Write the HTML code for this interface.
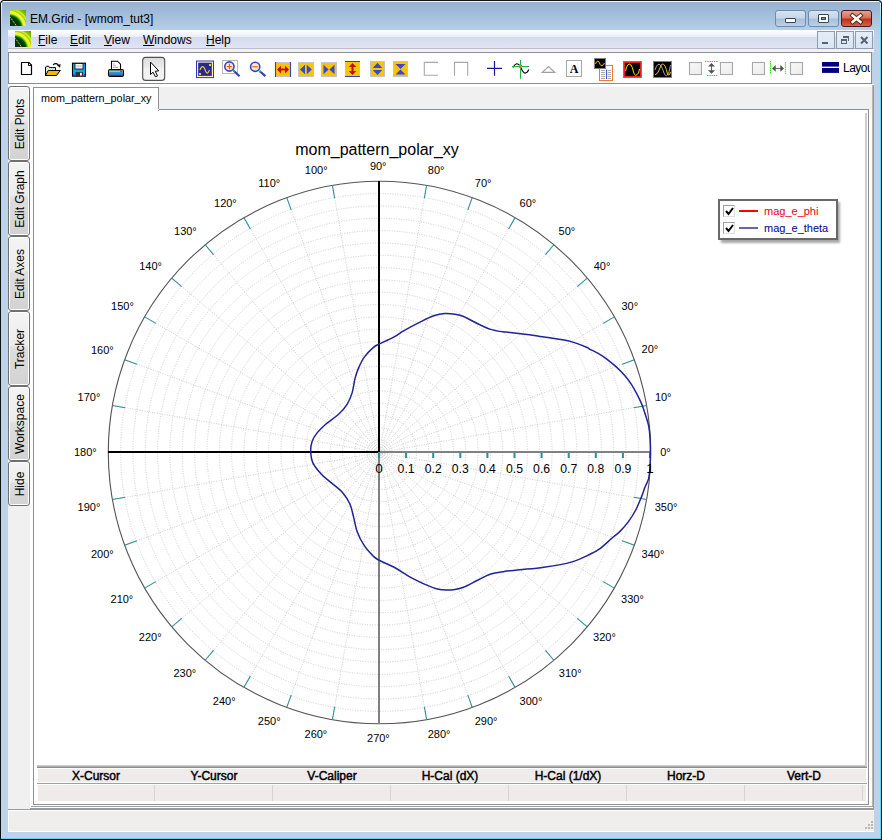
<!DOCTYPE html>
<html><head><meta charset="utf-8">
<style>
html,body{margin:0;padding:0;width:882px;height:840px;overflow:hidden;background:#fff;}
body{position:relative;font-family:"Liberation Sans",sans-serif;}
.a{position:absolute;box-sizing:border-box;}
.t{position:absolute;white-space:nowrap;line-height:1;}
svg text{font-family:"Liberation Sans",sans-serif;fill:#000;}
.al{font-size:11px;}
.tab{position:absolute;box-sizing:border-box;left:8px;width:22px;border:1px solid #707070;border-radius:3px;box-shadow:inset 0 0 0 1px #fff;background:linear-gradient(to bottom,#f4f4f4 0%,#ececec 45%,#dedede 50%,#d2d2d2 100%);}
.tab span{position:absolute;left:calc(50% + 1px);top:50%;transform:translate(-50%,-50%) rotate(-90deg);font-size:12px;white-space:nowrap;color:#000;}
.hd{position:absolute;top:769px;height:14px;width:118px;text-align:center;font-size:12px;font-weight:normal;-webkit-text-stroke:0.45px #000;line-height:14px;color:#000;}
.sep{position:absolute;top:785px;height:16px;width:1px;background:#d8d4d2;}
</style></head><body>
<!-- window frame -->
<div class="a" style="left:0;top:0;width:882px;height:840px;background:#111;border-radius:4px 4px 0 0;"></div>
<div class="a" style="left:1px;top:1px;width:880px;height:838px;background:linear-gradient(#97b2d1 0px,#9db8d6 8px,#b6cfe8 29px,#bcd3ea 40px,#bcd3ea 100%);border-radius:3px 3px 0 0;"></div>
<div class="a" style="left:3px;top:1px;width:876px;height:1px;background:#f4f8fc;"></div>
<div class="a" style="left:1px;top:3px;width:1px;height:30px;background:linear-gradient(#f4f8fc,rgba(244,248,252,0));"></div>
<div class="a" style="left:880px;top:3px;width:1px;height:836px;background:linear-gradient(#c8f4fc 0px,#5cd6f4 30px,#5cd6f4 100%);"></div>
<div class="a" style="left:1px;top:838px;width:880px;height:1px;background:#5cd6f4;"></div>
<div class="a" style="left:0;top:839px;width:882px;height:1px;background:#000;"></div>

<!-- title icon -->
<svg class="a" style="left:10px;top:10px" width="16" height="16" viewBox="0 0 16 16">
<defs><radialGradient id="ic1" cx="-1" cy="18" r="24" gradientUnits="userSpaceOnUse">
<stop offset="0" stop-color="#0a3008"/><stop offset="0.45" stop-color="#063a06"/><stop offset="0.52" stop-color="#0a6a0a"/><stop offset="0.56" stop-color="#60c010"/><stop offset="0.62" stop-color="#f4f830"/><stop offset="0.7" stop-color="#e8f428"/><stop offset="0.74" stop-color="#98d018"/><stop offset="0.8" stop-color="#d8f020"/><stop offset="0.86" stop-color="#88c010"/><stop offset="1" stop-color="#68a400"/></radialGradient></defs>
<rect width="16" height="16" fill="url(#ic1)"/>
<path d="M0.5 7.5 L6.5 16" stroke="#e8e8e8" stroke-width="1" stroke-dasharray="1 1"/>
</svg>
<div class="t" style="left:30px;top:13px;font-size:12px;color:#000;">EM.Grid - [wmom_tut3]</div>

<!-- caption buttons -->
<div class="a" style="left:775px;top:10px;width:31px;height:17px;border:1px solid #6f8ca9;border-radius:3px;background:linear-gradient(#d6e3f1 0%,#c6d7ea 45%,#a9c0da 55%,#bcd0e6 100%);"></div>
<div class="a" style="left:785px;top:18px;width:11px;height:5px;background:#fff;border:1px solid #3a4656;border-radius:1px;"></div>
<div class="a" style="left:808px;top:10px;width:31px;height:17px;border:1px solid #6f8ca9;border-radius:3px;background:linear-gradient(#d6e3f1 0%,#c6d7ea 45%,#a9c0da 55%,#bcd0e6 100%);"></div>
<div class="a" style="left:818px;top:14px;width:11px;height:9px;background:#fff;border:1px solid #3a4656;border-radius:1px;"></div>
<div class="a" style="left:821px;top:17px;width:5px;height:3px;background:#7d93ad;border:1px solid #3a4656;"></div>
<div class="a" style="left:841px;top:10px;width:31px;height:17px;border:1px solid #4c1820;border-radius:3px;background:linear-gradient(#e8a090 0%,#d87060 45%,#c03018 55%,#d06848 100%);"></div>
<svg class="a" style="left:849px;top:12px" width="15" height="13" viewBox="0 0 15 13"><path d="M3.5 3.5 L11.5 10 M11.5 3.5 L3.5 10" stroke="#5a2018" stroke-width="4.2" stroke-linecap="square"/><path d="M3.5 3.5 L11.5 10 M11.5 3.5 L3.5 10" stroke="#fff" stroke-width="2.4" stroke-linecap="square"/></svg>

<!-- menu bar -->
<div class="a" style="left:8px;top:30px;width:866px;height:18px;background:linear-gradient(#ffffff 0px,#fdfdfe 1px,#e9ecf6 7px,#d5daed 7.5px,#dfe5f5 18px);"></div>
<div class="a" style="left:8px;top:48px;width:866px;height:1px;background:#b9bdcc;"></div>
<div class="a" style="left:8px;top:49px;width:866px;height:3px;background:#f2f2f2;"></div>
<svg class="a" style="left:15px;top:31px" width="16" height="16" viewBox="0 0 16 16">
<defs><radialGradient id="ic2" cx="-1" cy="18" r="24" gradientUnits="userSpaceOnUse">
<stop offset="0" stop-color="#0a3008"/><stop offset="0.45" stop-color="#063a06"/><stop offset="0.52" stop-color="#0a6a0a"/><stop offset="0.56" stop-color="#60c010"/><stop offset="0.62" stop-color="#f4f830"/><stop offset="0.7" stop-color="#e8f428"/><stop offset="0.74" stop-color="#98d018"/><stop offset="0.8" stop-color="#d8f020"/><stop offset="0.86" stop-color="#88c010"/><stop offset="1" stop-color="#68a400"/></radialGradient></defs>
<rect width="16" height="16" fill="url(#ic2)"/>
<path d="M0.5 7.5 L6.5 16" stroke="#e8e8e8" stroke-width="1" stroke-dasharray="1 1"/>
</svg>
<div class="t" style="left:38px;top:34px;font-size:12px;"><u>F</u>ile</div>
<div class="t" style="left:70px;top:34px;font-size:12px;"><u>E</u>dit</div>
<div class="t" style="left:104px;top:34px;font-size:12px;"><u>V</u>iew</div>
<div class="t" style="left:143px;top:34px;font-size:12px;"><u>W</u>indows</div>
<div class="t" style="left:206px;top:34px;font-size:12px;"><u>H</u>elp</div>
<!-- mdi buttons -->
<div class="a" style="left:817px;top:31px;width:18px;height:18px;border:1px solid #8e9cb0;background:linear-gradient(#e4eef8,#dae6f4);"></div>
<div class="a" style="left:822px;top:42px;width:6px;height:2px;background:#5a6470;"></div>
<div class="a" style="left:836px;top:31px;width:18px;height:18px;border:1px solid #8e9cb0;background:linear-gradient(#e4eef8,#dae6f4);"></div>
<div class="a" style="left:841px;top:39px;width:6px;height:5px;border:1px solid #5a6470;border-top-width:2px;"></div>
<div class="a" style="left:843px;top:36px;width:6px;height:5px;border:1px solid #5a6470;border-top-width:2px;border-left:none;border-bottom:none;"></div>
<div class="a" style="left:855px;top:31px;width:18px;height:18px;border:1px solid #8e9cb0;background:linear-gradient(#e4eef8,#dae6f4);"></div>
<svg class="a" style="left:859px;top:35px" width="10" height="10" viewBox="0 0 10 10"><path d="M2 2 L8.5 8.5 M8.5 2 L2 8.5" stroke="#5a6470" stroke-width="2.1"/></svg>

<!-- toolbar -->
<div class="a" style="left:8px;top:52px;width:864px;height:32px;background:#fff;border:1px solid #8a8c98;"></div>
<svg class="a" style="left:0;top:52px" width="882" height="32" viewBox="0 52 882 32" shape-rendering="auto">
<!-- new doc -->
<path d="M21.5 62.5 H29 L31.5 65 V74.5 H21.5 Z" fill="#fff" stroke="#000" stroke-width="1.2"/>
<path d="M28.5 62.5 V65.5 H31.5" fill="none" stroke="#000" stroke-width="1"/>
<!-- open folder -->
<defs><pattern id="chk" width="2" height="2" patternUnits="userSpaceOnUse"><rect width="2" height="2" fill="#f8d870"/><rect width="1" height="1" fill="#fff"/><rect x="1" y="1" width="1" height="1" fill="#fff"/></pattern></defs>
<path d="M45.5 67 L46.3 66.3 H48.8 L49.6 67.6 H55.5 V70.5 H59.8 L56 75.5 H45.5 Z" fill="url(#chk)" stroke="#000" stroke-width="1"/>
<path d="M48.2 70.5 H60.3 L56.5 75.5 H45.5 Z" fill="#f0b800" stroke="#000" stroke-width="1"/>
<path d="M53 64.8 Q55.8 62.3 58.3 64.8" fill="none" stroke="#000" stroke-width="1.1"/>
<path d="M56.8 65 L60.6 64.3 L60 67.8 Z" fill="#000"/>
<!-- save -->
<rect x="72.5" y="63.2" width="13" height="13" fill="#10a8e8" stroke="#000" stroke-width="1.1"/>
<rect x="75" y="63.5" width="8" height="5.5" fill="#fff" stroke="#000" stroke-width="0.8"/>
<rect x="76.2" y="65" width="5.6" height="2.5" fill="#d8d8d8"/>
<rect x="75.5" y="72" width="7.5" height="4.2" fill="#303030"/>
<rect x="80" y="72.8" width="1.8" height="2.8" fill="#fff"/>
<rect x="73" y="74" width="1.5" height="2" fill="#3040c0"/>
<rect x="84" y="74" width="1.5" height="2" fill="#3040c0"/>
<!-- print -->
<path d="M111.5 61.2 H117.5 L120.5 64.2 V69.5 H111.5 Z" fill="#fff" stroke="#000" stroke-width="1.1"/>
<path d="M113 64 H115 M113 65.8 H116 M113 67.5 H118" stroke="#909090" stroke-width="0.7"/>
<rect x="108.5" y="69.5" width="15" height="7" rx="1" fill="#2040c0" stroke="#000" stroke-width="1"/>
<rect x="109" y="70.5" width="14" height="1.7" fill="#a8d820"/>
<rect x="109" y="72.2" width="14" height="1.3" fill="#20b0e0"/>
<rect x="109" y="73.5" width="14" height="1.2" fill="#6080c0"/>
<rect x="120" y="70.5" width="2.5" height="1.5" fill="#e04020"/>
<!-- pointer button -->
<defs><linearGradient id="pb" x1="0" y1="0" x2="0" y2="1"><stop offset="0" stop-color="#dcdcdc"/><stop offset="0.45" stop-color="#ececec"/><stop offset="0.5" stop-color="#f2f2f2"/><stop offset="0.9" stop-color="#f2f2f2"/><stop offset="1" stop-color="#ffffff"/></linearGradient></defs>
<rect x="142.7" y="57.4" width="22" height="23" rx="3" fill="url(#pb)" stroke="#505050" stroke-width="1.1"/>
<path d="M150.5 62 V74.5 L153 72.2 L155.5 76.8 L157.5 75.8 L155.2 71.3 L158.7 70.8 Z" fill="#fff" stroke="#000" stroke-width="1" stroke-linejoin="miter"/>
<!-- scope -->
<rect x="196.5" y="61" width="17" height="16.6" fill="#ffeebb" stroke="#3034c8" stroke-width="1"/>
<rect x="198.2" y="62.7" width="13.6" height="13.2" fill="#232a98"/>
<path d="M200 70 Q201.5 65.5 203.5 67 Q205 68.5 205.5 71 Q207 74.5 208.5 72 L209.5 70" fill="none" stroke="#f8c828" stroke-width="1.2"/>
<rect x="209" y="64" width="2" height="2" fill="#f8c828"/>
<rect x="199" y="73" width="2" height="2" fill="#f8c828"/>
<!-- zoom in -->
<rect x="222.5" y="60.5" width="15" height="13" fill="none" stroke="#b8b8b8" stroke-width="1"/>
<line x1="233.5" y1="70.5" x2="239.5" y2="76.2" stroke="#3040c0" stroke-width="2.2"/>
<line x1="233" y1="70" x2="234.5" y2="71.5" stroke="#60c020" stroke-width="1.5"/>
<circle cx="229.4" cy="66.5" r="4.6" fill="#f8ecc8" stroke="#3844c8" stroke-width="1.6"/>
<path d="M229.4 63.8 V69.2 M226.7 66.5 H232.1" stroke="#ff5010" stroke-width="1.1"/>
<!-- zoom out -->
<line x1="259.5" y1="71" x2="265.4" y2="76.2" stroke="#3040c0" stroke-width="2.2"/>
<line x1="259" y1="70.5" x2="260.5" y2="72" stroke="#60c020" stroke-width="1.5"/>
<circle cx="255.2" cy="66.8" r="4.6" fill="#f8ecc8" stroke="#3844c8" stroke-width="1.6"/>
<path d="M252.5 66.8 H257.9" stroke="#ff5010" stroke-width="1.1"/>
<!-- yellow icons -->
<rect x="275.5" y="62.5" width="15" height="14" fill="#fcc400" stroke="#c4c4c4" stroke-width="1"/>
<path d="M275.5 62 V77 M290.5 62 V77" stroke="#3040d0" stroke-width="1.1"/>
<path d="M277 69.6 L281 65.8 V68.6 H285 V65.8 L289 69.6 L285 73.4 V70.6 H281 V73.4 Z" fill="#c01010"/>
<rect x="298.5" y="62.5" width="15" height="14" fill="#fcc400" stroke="#c4c4c4" stroke-width="1"/>
<path d="M300 69.5 L305 64.8 V74.2 Z M311.8 69.5 L306.8 64.8 V74.2 Z" fill="#3848d0"/>
<rect x="321.5" y="62.5" width="15" height="14" fill="#fcc400" stroke="#c4c4c4" stroke-width="1"/>
<path d="M323.5 64.8 L328.6 69.5 L323.5 74.2 Z M334.5 64.8 L329.4 69.5 L334.5 74.2 Z" fill="#3848d0"/>
<rect x="345.5" y="61.5" width="14" height="15" fill="#fcc400" stroke="#c4c4c4" stroke-width="1"/>
<path d="M345 61.5 H360 M345 76.5 H360" stroke="#3040d0" stroke-width="1.1"/>
<path d="M352.5 63 L356.3 67 H353.5 V71 H356.3 L352.5 75 L348.7 71 H351.5 V67 H348.7 Z" fill="#c01010"/>
<rect x="370.5" y="61.5" width="14" height="15" fill="#fcc400" stroke="#c4c4c4" stroke-width="1"/>
<path d="M377.5 62.8 L382.3 67.9 H372.7 Z M377.5 75 L382.3 69.9 H372.7 Z" fill="#3848d0"/>
<rect x="393.5" y="61.5" width="14" height="15" fill="#fcc400" stroke="#c4c4c4" stroke-width="1"/>
<path d="M395.5 64 H405.5 L400.5 69 Z M395.5 74.5 H405.5 L400.5 69.5 Z" fill="#3848d0"/>
<!-- brackets -->
<path d="M438 62.4 H424.3 V75.3 H438" fill="none" stroke="#a8a8a8" stroke-width="1.1"/>
<path d="M454.5 75.8 V62.4 H467.7 V75.8" fill="none" stroke="#a8a8a8" stroke-width="1.1"/>
<!-- plus -->
<path d="M494.5 61 V75.8 M487 68.3 H502" stroke="#1a1a90" stroke-width="1.2"/>
<!-- sine cross -->
<path d="M513 67.6 Q516.5 60.5 520.5 66.5 Q524.5 78 528.9 69.6" fill="none" stroke="#000" stroke-width="1.1"/>
<path d="M520.5 60 V78.7 M512 66.5 H529" stroke="#20b040" stroke-width="1.1"/>
<rect x="519" y="65" width="3" height="3" fill="#ff7020"/>
<!-- triangle -->
<path d="M542.3 72.4 L548.5 66.6 L554.7 72.4 Z" fill="none" stroke="#a0a0a0" stroke-width="1.2"/>
<!-- A box -->
<rect x="566.5" y="60.5" width="15" height="16" fill="#fff" stroke="#a8a8a8" stroke-width="1"/>
<text x="574.2" y="73.3" text-anchor="middle" style="font-family:'Liberation Serif',serif;font-weight:bold;font-size:12px;fill:#000">A</text>
<!-- scope + doc -->
<rect x="599.5" y="65.5" width="13" height="15" fill="#fff" stroke="#f87830" stroke-width="1"/>
<rect x="601" y="70" width="4" height="1" fill="#a8a8a8"/><rect x="608" y="70" width="3" height="1" fill="#a8a8a8"/><rect x="601" y="72" width="4" height="1" fill="#a8a8a8"/><rect x="608" y="72" width="3" height="1" fill="#a8a8a8"/><rect x="601" y="74" width="4" height="1" fill="#a8a8a8"/><rect x="608" y="74" width="3" height="1" fill="#a8a8a8"/><rect x="601" y="76" width="4" height="1" fill="#a8a8a8"/><rect x="608" y="76" width="3" height="1" fill="#a8a8a8"/><rect x="601" y="78" width="4" height="1" fill="#a8a8a8"/><rect x="608" y="78" width="3" height="1" fill="#a8a8a8"/>
<path d="M606.6 69.5 V79" stroke="#3040d0" stroke-width="1"/>
<rect x="594.5" y="58.5" width="11" height="10" fill="#000" stroke="#808080" stroke-width="1"/>
<path d="M595.5 64 Q597 59.5 599 62 Q601 67.5 603 65 L604.5 63" fill="none" stroke="#f8c800" stroke-width="1"/>
<!-- red scope -->
<rect x="623.5" y="61.5" width="18" height="16" fill="#000" stroke="#808080" stroke-width="1"/>
<rect x="624.5" y="62.5" width="16" height="14" fill="#000" stroke="#e82020" stroke-width="1.2"/>
<path d="M625.5 71 Q627.5 61.5 631 65 Q632.5 67 633.5 72 Q635 78 638.5 73 L639.5 69" fill="none" stroke="#f8e000" stroke-width="1"/>
<!-- black scope -->
<rect x="653.5" y="61.5" width="18" height="16" fill="#000" stroke="#808080" stroke-width="1"/>
<path d="M655 70 Q657.5 62 660.5 65 Q662.5 68 664 73 Q666.5 79 669 72 L670.5 65" fill="none" stroke="#a0a0a0" stroke-width="1"/>
<path d="M655 75 Q658 74 660 68 Q662 61 665 66 Q666.5 69 667.5 74 Q669 77 670.5 72" fill="none" stroke="#f8c800" stroke-width="1"/>
<!-- caliper boxes -->
<defs><linearGradient id="bx" x1="0" y1="0" x2="1" y2="1"><stop offset="0" stop-color="#f8f8f8"/><stop offset="1" stop-color="#ececec"/></linearGradient></defs>
<rect x="689.5" y="62.5" width="12" height="12" fill="url(#bx)" stroke="#a8a8a8" stroke-width="1.1"/>
<rect x="720.5" y="62.5" width="12" height="12" fill="url(#bx)" stroke="#a8a8a8" stroke-width="1.1"/>
<rect x="752.5" y="62.5" width="12" height="12" fill="url(#bx)" stroke="#a8a8a8" stroke-width="1.1"/>
<rect x="790.5" y="62.5" width="12" height="12" fill="url(#bx)" stroke="#a8a8a8" stroke-width="1.1"/>
<path d="M705 61.5 H718 M707 75.5 H718" stroke="#30e010" stroke-width="1" stroke-dasharray="1.5 0.7"/>
<path d="M711.5 63 L715 66.5 H708 Z M711.5 73.7 L715 70.3 H708 Z" fill="#505050"/>
<path d="M711.5 66 V71" stroke="#606060" stroke-width="1"/>
<path d="M770.5 61 V74 M785.4 62 V74" stroke="#30e010" stroke-width="1" stroke-dasharray="1.5 0.7"/>
<path d="M772 68.4 L775.7 65 V71.8 Z M784 68.4 L780.3 65 V71.8 Z" fill="#505050"/>
<path d="M775 68.4 H781" stroke="#606060" stroke-width="1"/>
<!-- layout -->
<rect x="822" y="62" width="17" height="4.6" fill="#000080"/>
<rect x="822" y="68" width="17" height="4.9" fill="#000080"/>
</svg>
<div class="a" style="left:843px;top:60px;width:27px;height:16px;overflow:hidden;"><div class="t" style="left:0;top:2px;font-size:12px;letter-spacing:-0.5px;">Layout</div></div>


<!-- client area -->
<div class="a" style="left:8px;top:84px;width:866px;height:726px;background:#fff;"></div>
<div class="a" style="left:8px;top:506px;width:22px;height:304px;background:#f0f0f0;"></div>
<div class="a" style="left:872px;top:85px;width:1px;height:722px;background:#b4b4b4;"></div><div class="a" style="left:873px;top:85px;width:1px;height:725px;background:#9a9a9a;"></div>

<!-- left tabs -->
<div class="tab" style="top:86px;height:75px;"><span>Edit Plots</span></div>
<div class="tab" style="top:161px;height:75px;"><span>Edit Graph</span></div>
<div class="tab" style="top:236px;height:75px;"><span>Edit Axes</span></div>
<div class="tab" style="top:311px;height:75px;"><span>Tracker</span></div>
<div class="tab" style="top:386px;height:75px;"><span>Workspace</span></div>
<div class="tab" style="top:461px;height:45px;"><span>Hide</span></div>

<!-- doc tab strip -->
<div class="a" style="left:158px;top:87px;width:714px;height:23px;background:#f0f0f0;"></div>
<div class="a" style="left:33px;top:87px;width:126px;height:24px;background:#fff;border:1px solid #8c8f9c;border-bottom:none;"></div>
<div class="t" style="left:41px;top:93px;font-size:10.8px;">mom_pattern_polar_xy</div>
<!-- content panel -->
<div class="a" style="left:33px;top:109px;width:836px;height:696px;border:1px solid #8c8f9c;"></div>
<div class="a" style="left:34px;top:109px;width:125px;height:1px;background:#fff;"></div>
<div class="a" style="left:31px;top:806px;width:842px;height:1px;background:#a0a0a0;"></div>
<div class="a" style="left:30px;top:808px;width:844px;height:2px;background:#999;"></div><div class="a" style="left:8px;top:809px;width:22px;height:1px;background:#999;"></div>

<!-- chart frame -->
<div class="a" style="left:865px;top:113px;width:2px;height:653px;background:#cdcdcd;"></div>
<div class="a" style="left:37px;top:765px;width:830px;height:1px;background:#cbcbcb;"></div>

<svg class="a" style="left:0;top:0" width="882" height="840" viewBox="0 0 882 840">
<circle cx="379.5" cy="452.5" r="12.33" fill="none" stroke="#cdcdcd" stroke-width="1" stroke-dasharray="1 1.5"/>
<circle cx="379.5" cy="452.5" r="24.65" fill="none" stroke="#cdcdcd" stroke-width="1" stroke-dasharray="1 1.5"/>
<circle cx="379.5" cy="452.5" r="36.98" fill="none" stroke="#cdcdcd" stroke-width="1" stroke-dasharray="1 1.5"/>
<circle cx="379.5" cy="452.5" r="49.31" fill="none" stroke="#cdcdcd" stroke-width="1" stroke-dasharray="1 1.5"/>
<circle cx="379.5" cy="452.5" r="61.64" fill="none" stroke="#cdcdcd" stroke-width="1" stroke-dasharray="1 1.5"/>
<circle cx="379.5" cy="452.5" r="73.96" fill="none" stroke="#cdcdcd" stroke-width="1" stroke-dasharray="1 1.5"/>
<circle cx="379.5" cy="452.5" r="86.29" fill="none" stroke="#cdcdcd" stroke-width="1" stroke-dasharray="1 1.5"/>
<circle cx="379.5" cy="452.5" r="98.62" fill="none" stroke="#cdcdcd" stroke-width="1" stroke-dasharray="1 1.5"/>
<circle cx="379.5" cy="452.5" r="110.95" fill="none" stroke="#cdcdcd" stroke-width="1" stroke-dasharray="1 1.5"/>
<circle cx="379.5" cy="452.5" r="123.27" fill="none" stroke="#cdcdcd" stroke-width="1" stroke-dasharray="1 1.5"/>
<circle cx="379.5" cy="452.5" r="135.60" fill="none" stroke="#cdcdcd" stroke-width="1" stroke-dasharray="1 1.5"/>
<circle cx="379.5" cy="452.5" r="147.93" fill="none" stroke="#cdcdcd" stroke-width="1" stroke-dasharray="1 1.5"/>
<circle cx="379.5" cy="452.5" r="160.25" fill="none" stroke="#cdcdcd" stroke-width="1" stroke-dasharray="1 1.5"/>
<circle cx="379.5" cy="452.5" r="172.58" fill="none" stroke="#cdcdcd" stroke-width="1" stroke-dasharray="1 1.5"/>
<circle cx="379.5" cy="452.5" r="184.91" fill="none" stroke="#cdcdcd" stroke-width="1" stroke-dasharray="1 1.5"/>
<circle cx="379.5" cy="452.5" r="197.24" fill="none" stroke="#cdcdcd" stroke-width="1" stroke-dasharray="1 1.5"/>
<circle cx="379.5" cy="452.5" r="209.56" fill="none" stroke="#cdcdcd" stroke-width="1" stroke-dasharray="1 1.5"/>
<circle cx="379.5" cy="452.5" r="221.89" fill="none" stroke="#cdcdcd" stroke-width="1" stroke-dasharray="1 1.5"/>
<circle cx="379.5" cy="452.5" r="234.22" fill="none" stroke="#cdcdcd" stroke-width="1" stroke-dasharray="1 1.5"/>
<circle cx="379.5" cy="452.5" r="246.55" fill="none" stroke="#cdcdcd" stroke-width="1" stroke-dasharray="1 1.5"/>
<circle cx="379.5" cy="452.5" r="258.87" fill="none" stroke="#cdcdcd" stroke-width="1" stroke-dasharray="1 1.5"/>
<line x1="379.5" y1="452.5" x2="646.58" y2="405.41" stroke="#cdcdcd" stroke-width="1" stroke-dasharray="1 1.5"/>
<line x1="379.5" y1="452.5" x2="634.34" y2="359.74" stroke="#cdcdcd" stroke-width="1" stroke-dasharray="1 1.5"/>
<line x1="379.5" y1="452.5" x2="614.37" y2="316.90" stroke="#cdcdcd" stroke-width="1" stroke-dasharray="1 1.5"/>
<line x1="379.5" y1="452.5" x2="587.25" y2="278.18" stroke="#cdcdcd" stroke-width="1" stroke-dasharray="1 1.5"/>
<line x1="379.5" y1="452.5" x2="553.82" y2="244.75" stroke="#cdcdcd" stroke-width="1" stroke-dasharray="1 1.5"/>
<line x1="379.5" y1="452.5" x2="515.10" y2="217.63" stroke="#cdcdcd" stroke-width="1" stroke-dasharray="1 1.5"/>
<line x1="379.5" y1="452.5" x2="472.26" y2="197.66" stroke="#cdcdcd" stroke-width="1" stroke-dasharray="1 1.5"/>
<line x1="379.5" y1="452.5" x2="426.59" y2="185.42" stroke="#cdcdcd" stroke-width="1" stroke-dasharray="1 1.5"/>
<line x1="379.5" y1="452.5" x2="332.41" y2="185.42" stroke="#cdcdcd" stroke-width="1" stroke-dasharray="1 1.5"/>
<line x1="379.5" y1="452.5" x2="286.74" y2="197.66" stroke="#cdcdcd" stroke-width="1" stroke-dasharray="1 1.5"/>
<line x1="379.5" y1="452.5" x2="243.90" y2="217.63" stroke="#cdcdcd" stroke-width="1" stroke-dasharray="1 1.5"/>
<line x1="379.5" y1="452.5" x2="205.18" y2="244.75" stroke="#cdcdcd" stroke-width="1" stroke-dasharray="1 1.5"/>
<line x1="379.5" y1="452.5" x2="171.75" y2="278.18" stroke="#cdcdcd" stroke-width="1" stroke-dasharray="1 1.5"/>
<line x1="379.5" y1="452.5" x2="144.63" y2="316.90" stroke="#cdcdcd" stroke-width="1" stroke-dasharray="1 1.5"/>
<line x1="379.5" y1="452.5" x2="124.66" y2="359.74" stroke="#cdcdcd" stroke-width="1" stroke-dasharray="1 1.5"/>
<line x1="379.5" y1="452.5" x2="112.42" y2="405.41" stroke="#cdcdcd" stroke-width="1" stroke-dasharray="1 1.5"/>
<line x1="379.5" y1="452.5" x2="112.42" y2="499.59" stroke="#cdcdcd" stroke-width="1" stroke-dasharray="1 1.5"/>
<line x1="379.5" y1="452.5" x2="124.66" y2="545.26" stroke="#cdcdcd" stroke-width="1" stroke-dasharray="1 1.5"/>
<line x1="379.5" y1="452.5" x2="144.63" y2="588.10" stroke="#cdcdcd" stroke-width="1" stroke-dasharray="1 1.5"/>
<line x1="379.5" y1="452.5" x2="171.75" y2="626.82" stroke="#cdcdcd" stroke-width="1" stroke-dasharray="1 1.5"/>
<line x1="379.5" y1="452.5" x2="205.18" y2="660.25" stroke="#cdcdcd" stroke-width="1" stroke-dasharray="1 1.5"/>
<line x1="379.5" y1="452.5" x2="243.90" y2="687.37" stroke="#cdcdcd" stroke-width="1" stroke-dasharray="1 1.5"/>
<line x1="379.5" y1="452.5" x2="286.74" y2="707.34" stroke="#cdcdcd" stroke-width="1" stroke-dasharray="1 1.5"/>
<line x1="379.5" y1="452.5" x2="332.41" y2="719.58" stroke="#cdcdcd" stroke-width="1" stroke-dasharray="1 1.5"/>
<line x1="379.5" y1="452.5" x2="426.59" y2="719.58" stroke="#cdcdcd" stroke-width="1" stroke-dasharray="1 1.5"/>
<line x1="379.5" y1="452.5" x2="472.26" y2="707.34" stroke="#cdcdcd" stroke-width="1" stroke-dasharray="1 1.5"/>
<line x1="379.5" y1="452.5" x2="515.10" y2="687.37" stroke="#cdcdcd" stroke-width="1" stroke-dasharray="1 1.5"/>
<line x1="379.5" y1="452.5" x2="553.82" y2="660.25" stroke="#cdcdcd" stroke-width="1" stroke-dasharray="1 1.5"/>
<line x1="379.5" y1="452.5" x2="587.25" y2="626.82" stroke="#cdcdcd" stroke-width="1" stroke-dasharray="1 1.5"/>
<line x1="379.5" y1="452.5" x2="614.37" y2="588.10" stroke="#cdcdcd" stroke-width="1" stroke-dasharray="1 1.5"/>
<line x1="379.5" y1="452.5" x2="634.34" y2="545.26" stroke="#cdcdcd" stroke-width="1" stroke-dasharray="1 1.5"/>
<line x1="379.5" y1="452.5" x2="646.58" y2="499.59" stroke="#cdcdcd" stroke-width="1" stroke-dasharray="1 1.5"/>
<circle cx="379.5" cy="452.5" r="271.2" fill="none" stroke="#555" stroke-width="1.1"/>
<line x1="646.58" y1="405.41" x2="633.78" y2="407.66" stroke="#2a9090" stroke-width="1.05"/>
<line x1="634.34" y1="359.74" x2="622.13" y2="364.19" stroke="#2a9090" stroke-width="1.05"/>
<line x1="614.37" y1="316.90" x2="603.11" y2="323.40" stroke="#2a9090" stroke-width="1.05"/>
<line x1="587.25" y1="278.18" x2="577.29" y2="286.53" stroke="#2a9090" stroke-width="1.05"/>
<line x1="553.82" y1="244.75" x2="545.47" y2="254.71" stroke="#2a9090" stroke-width="1.05"/>
<line x1="515.10" y1="217.63" x2="508.60" y2="228.89" stroke="#2a9090" stroke-width="1.05"/>
<line x1="472.26" y1="197.66" x2="467.81" y2="209.87" stroke="#2a9090" stroke-width="1.05"/>
<line x1="426.59" y1="185.42" x2="424.34" y2="198.22" stroke="#2a9090" stroke-width="1.05"/>
<line x1="332.41" y1="185.42" x2="334.66" y2="198.22" stroke="#2a9090" stroke-width="1.05"/>
<line x1="286.74" y1="197.66" x2="291.19" y2="209.87" stroke="#2a9090" stroke-width="1.05"/>
<line x1="243.90" y1="217.63" x2="250.40" y2="228.89" stroke="#2a9090" stroke-width="1.05"/>
<line x1="205.18" y1="244.75" x2="213.53" y2="254.71" stroke="#2a9090" stroke-width="1.05"/>
<line x1="171.75" y1="278.18" x2="181.71" y2="286.53" stroke="#2a9090" stroke-width="1.05"/>
<line x1="144.63" y1="316.90" x2="155.89" y2="323.40" stroke="#2a9090" stroke-width="1.05"/>
<line x1="124.66" y1="359.74" x2="136.87" y2="364.19" stroke="#2a9090" stroke-width="1.05"/>
<line x1="112.42" y1="405.41" x2="125.22" y2="407.66" stroke="#2a9090" stroke-width="1.05"/>
<line x1="112.42" y1="499.59" x2="125.22" y2="497.34" stroke="#2a9090" stroke-width="1.05"/>
<line x1="124.66" y1="545.26" x2="136.87" y2="540.81" stroke="#2a9090" stroke-width="1.05"/>
<line x1="144.63" y1="588.10" x2="155.89" y2="581.60" stroke="#2a9090" stroke-width="1.05"/>
<line x1="171.75" y1="626.82" x2="181.71" y2="618.47" stroke="#2a9090" stroke-width="1.05"/>
<line x1="205.18" y1="660.25" x2="213.53" y2="650.29" stroke="#2a9090" stroke-width="1.05"/>
<line x1="243.90" y1="687.37" x2="250.40" y2="676.11" stroke="#2a9090" stroke-width="1.05"/>
<line x1="286.74" y1="707.34" x2="291.19" y2="695.13" stroke="#2a9090" stroke-width="1.05"/>
<line x1="332.41" y1="719.58" x2="334.66" y2="706.78" stroke="#2a9090" stroke-width="1.05"/>
<line x1="426.59" y1="719.58" x2="424.34" y2="706.78" stroke="#2a9090" stroke-width="1.05"/>
<line x1="472.26" y1="707.34" x2="467.81" y2="695.13" stroke="#2a9090" stroke-width="1.05"/>
<line x1="515.10" y1="687.37" x2="508.60" y2="676.11" stroke="#2a9090" stroke-width="1.05"/>
<line x1="553.82" y1="660.25" x2="545.47" y2="650.29" stroke="#2a9090" stroke-width="1.05"/>
<line x1="587.25" y1="626.82" x2="577.29" y2="618.47" stroke="#2a9090" stroke-width="1.05"/>
<line x1="614.37" y1="588.10" x2="603.11" y2="581.60" stroke="#2a9090" stroke-width="1.05"/>
<line x1="634.34" y1="545.26" x2="622.13" y2="540.81" stroke="#2a9090" stroke-width="1.05"/>
<line x1="646.58" y1="499.59" x2="633.78" y2="497.34" stroke="#2a9090" stroke-width="1.05"/>
<rect x="108.0" y="451.0" width="271.0" height="2" fill="#000"/>
<rect x="379.0" y="451.0" width="271.0" height="2" fill="#808080"/>
<rect x="378.0" y="181.0" width="2" height="271.0" fill="#000"/>
<rect x="378.0" y="452.0" width="2" height="271.0" fill="#808080"/>
<rect x="378.00" y="453.0" width="2" height="5" fill="#2a9090"/>
<rect x="405.10" y="453.0" width="2" height="5" fill="#2a9090"/>
<rect x="432.20" y="453.0" width="2" height="5" fill="#2a9090"/>
<rect x="459.30" y="453.0" width="2" height="5" fill="#2a9090"/>
<rect x="486.40" y="453.0" width="2" height="5" fill="#2a9090"/>
<rect x="513.50" y="453.0" width="2" height="5" fill="#2a9090"/>
<rect x="540.60" y="453.0" width="2" height="5" fill="#2a9090"/>
<rect x="567.70" y="453.0" width="2" height="5" fill="#2a9090"/>
<rect x="594.80" y="453.0" width="2" height="5" fill="#2a9090"/>
<rect x="621.90" y="453.0" width="2" height="5" fill="#2a9090"/>
<rect x="649.00" y="453.0" width="2" height="5" fill="#2a9090"/>
<path d="M650.40 451.40 C650.40 446.40 650.30 441.38 650.00 437.10 C649.70 432.82 649.32 429.27 648.60 425.70 C647.88 422.13 646.78 419.15 645.70 415.70 C644.62 412.25 643.53 408.57 642.10 405.00 C640.67 401.43 638.88 397.75 637.10 394.30 C635.32 390.85 633.53 387.52 631.40 384.30 C629.27 381.08 626.92 377.98 624.30 375.00 C621.68 372.02 618.57 369.02 615.70 366.40 C612.83 363.78 609.95 361.43 607.10 359.30 C604.25 357.17 601.45 355.27 598.60 353.60 C595.75 351.93 592.02 350.37 590.00 349.30 C587.98 348.23 589.63 348.48 586.50 347.20 C583.37 345.92 575.45 342.87 571.20 341.60 C566.95 340.33 565.53 340.37 561.00 339.60 C556.47 338.83 549.67 337.85 544.00 337.00 C538.33 336.15 532.67 335.27 527.00 334.50 C521.33 333.73 514.05 332.85 510.00 332.40 C505.95 331.95 505.92 332.30 502.70 331.80 C499.48 331.30 494.68 330.65 490.70 329.40 C486.72 328.15 483.33 326.45 478.80 324.30 C474.27 322.15 467.47 318.17 463.50 316.50 C459.53 314.83 458.12 314.78 455.00 314.30 C451.88 313.82 448.33 313.35 444.80 313.60 C441.27 313.85 437.77 314.47 433.80 315.80 C429.83 317.13 425.97 319.13 421.00 321.60 C416.03 324.07 408.25 328.18 404.00 330.60 C399.75 333.02 398.18 334.53 395.50 336.10 C392.82 337.67 390.72 338.63 387.90 340.00 C385.08 341.37 381.10 342.98 378.60 344.30 C376.10 345.62 375.28 345.77 372.90 347.90 C370.52 350.03 366.68 353.77 364.30 357.10 C361.92 360.43 360.15 364.32 358.60 367.90 C357.05 371.48 356.08 374.43 355.00 378.60 C353.92 382.77 353.42 388.62 352.10 392.90 C350.78 397.18 349.35 400.73 347.10 404.30 C344.85 407.87 342.17 410.97 338.60 414.30 C335.03 417.63 329.28 421.20 325.70 424.30 C322.12 427.40 319.37 430.05 317.10 432.90 C314.83 435.75 313.17 438.32 312.10 441.40 C311.03 444.48 310.57 447.82 310.70 451.40 C310.83 454.98 311.12 459.08 312.90 462.90 C314.68 466.72 318.32 470.97 321.40 474.30 C324.48 477.63 327.82 479.80 331.40 482.90 C334.98 486.00 339.80 489.33 342.90 492.90 C346.00 496.47 348.22 500.27 350.00 504.30 C351.78 508.33 352.42 512.58 353.60 517.10 C354.78 521.62 355.32 526.63 357.10 531.40 C358.88 536.17 361.67 541.65 364.30 545.70 C366.93 549.75 370.52 553.32 372.90 555.70 C375.28 558.08 374.83 557.95 378.60 560.00 C382.37 562.05 389.85 564.95 395.50 568.00 C401.15 571.05 406.27 575.03 412.50 578.30 C418.73 581.57 427.80 585.68 432.90 587.60 C438.00 589.52 439.70 589.45 443.10 589.80 C446.50 590.15 449.90 590.12 453.30 589.70 C456.70 589.28 459.53 588.83 463.50 587.30 C467.47 585.77 472.57 582.72 477.10 580.50 C481.63 578.28 486.17 575.50 490.70 574.00 C495.23 572.50 499.47 572.20 504.30 571.50 C509.13 570.80 513.08 570.52 519.70 569.80 C526.32 569.08 535.42 568.48 544.00 567.20 C552.58 565.92 563.53 564.25 571.20 562.10 C578.87 559.95 585.20 556.55 590.00 554.30 C594.80 552.05 596.43 551.22 600.00 548.60 C603.57 545.98 608.07 541.47 611.40 538.60 C614.73 535.73 617.13 534.27 620.00 531.40 C622.87 528.53 625.98 524.97 628.60 521.40 C631.22 517.83 633.57 514.05 635.70 510.00 C637.83 505.95 639.85 500.92 641.40 497.10 C642.95 493.28 643.80 490.18 645.00 487.10 C646.20 484.02 647.77 481.93 648.60 478.60 C649.43 475.27 649.70 471.63 650.00 467.10 C650.30 462.57 650.40 456.40 650.40 451.40" fill="none" stroke="#22229a" stroke-width="1.5" stroke-linejoin="round"/>
<text x="665.5" y="455.5" text-anchor="middle" class="al">0°</text>
<text x="663.2" y="401.0" text-anchor="middle" class="al">10°</text>
<text x="649.9" y="353.4" text-anchor="middle" class="al">20°</text>
<text x="629.8" y="309.6" text-anchor="middle" class="al">30°</text>
<text x="602.0" y="269.7" text-anchor="middle" class="al">40°</text>
<text x="566.9" y="235.4" text-anchor="middle" class="al">50°</text>
<text x="527.9" y="206.8" text-anchor="middle" class="al">60°</text>
<text x="483.1" y="187.0" text-anchor="middle" class="al">70°</text>
<text x="436.1" y="173.7" text-anchor="middle" class="al">80°</text>
<text x="378.2" y="169.9" text-anchor="middle" class="al">90°</text>
<text x="316.2" y="173.7" text-anchor="middle" class="al">100°</text>
<text x="269.2" y="187.0" text-anchor="middle" class="al">110°</text>
<text x="225.4" y="206.9" text-anchor="middle" class="al">120°</text>
<text x="185.4" y="234.7" text-anchor="middle" class="al">130°</text>
<text x="150.6" y="269.8" text-anchor="middle" class="al">140°</text>
<text x="122.5" y="309.8" text-anchor="middle" class="al">150°</text>
<text x="102.3" y="353.6" text-anchor="middle" class="al">160°</text>
<text x="89.0" y="401.2" text-anchor="middle" class="al">170°</text>
<text x="85.3" y="455.7" text-anchor="middle" class="al">180°</text>
<text x="89.0" y="510.7" text-anchor="middle" class="al">190°</text>
<text x="102.3" y="557.6" text-anchor="middle" class="al">200°</text>
<text x="121.9" y="602.9" text-anchor="middle" class="al">210°</text>
<text x="150.2" y="641.4" text-anchor="middle" class="al">220°</text>
<text x="184.8" y="676.5" text-anchor="middle" class="al">230°</text>
<text x="224.2" y="705.0" text-anchor="middle" class="al">240°</text>
<text x="269.2" y="724.9" text-anchor="middle" class="al">250°</text>
<text x="315.9" y="738.2" text-anchor="middle" class="al">260°</text>
<text x="378.4" y="742.0" text-anchor="middle" class="al">270°</text>
<text x="439.1" y="738.2" text-anchor="middle" class="al">280°</text>
<text x="486.1" y="724.9" text-anchor="middle" class="al">290°</text>
<text x="531.0" y="705.0" text-anchor="middle" class="al">300°</text>
<text x="570.2" y="676.5" text-anchor="middle" class="al">310°</text>
<text x="604.5" y="641.4" text-anchor="middle" class="al">320°</text>
<text x="632.5" y="602.9" text-anchor="middle" class="al">330°</text>
<text x="653.0" y="557.6" text-anchor="middle" class="al">340°</text>
<text x="666.1" y="510.7" text-anchor="middle" class="al">350°</text>
<text x="379.0" y="473" text-anchor="middle" style="font-size:13.5px">0</text>
<text x="406.1" y="473" text-anchor="middle" style="font-size:13.5px" textLength="17" lengthAdjust="spacingAndGlyphs">0.1</text>
<text x="433.2" y="473" text-anchor="middle" style="font-size:13.5px" textLength="17" lengthAdjust="spacingAndGlyphs">0.2</text>
<text x="460.3" y="473" text-anchor="middle" style="font-size:13.5px" textLength="17" lengthAdjust="spacingAndGlyphs">0.3</text>
<text x="487.4" y="473" text-anchor="middle" style="font-size:13.5px" textLength="17" lengthAdjust="spacingAndGlyphs">0.4</text>
<text x="514.5" y="473" text-anchor="middle" style="font-size:13.5px" textLength="17" lengthAdjust="spacingAndGlyphs">0.5</text>
<text x="541.6" y="473" text-anchor="middle" style="font-size:13.5px" textLength="17" lengthAdjust="spacingAndGlyphs">0.6</text>
<text x="568.7" y="473" text-anchor="middle" style="font-size:13.5px" textLength="17" lengthAdjust="spacingAndGlyphs">0.7</text>
<text x="595.8" y="473" text-anchor="middle" style="font-size:13.5px" textLength="17" lengthAdjust="spacingAndGlyphs">0.8</text>
<text x="622.9" y="473" text-anchor="middle" style="font-size:13.5px" textLength="17" lengthAdjust="spacingAndGlyphs">0.9</text>
<text x="650.0" y="473" text-anchor="middle" style="font-size:13.5px">1</text>
<text x="377" y="155" text-anchor="middle" style="font-size:16px">mom_pattern_polar_xy</text>
</svg>

<!-- legend -->
<div class="a" style="left:721px;top:202px;width:119px;height:41px;background:#a8a8a8;filter:blur(1px);"></div>
<div class="a" style="left:718px;top:199px;width:120px;height:41px;background:#fff;border:2px solid #686868;"></div>
<div class="a" style="left:723px;top:205px;width:12px;height:12px;border:1px solid #a0a0a0;border-right-color:#e0e0e0;border-bottom-color:#e0e0e0;background:#fff;"></div>
<svg class="a" style="left:725px;top:207px" width="9" height="9" viewBox="0 0 9 9"><path d="M1 4 L3.5 7 L8 1" fill="none" stroke="#000" stroke-width="2"/></svg>
<div class="a" style="left:723px;top:222px;width:12px;height:12px;border:1px solid #a0a0a0;border-right-color:#e0e0e0;border-bottom-color:#e0e0e0;background:#fff;"></div>
<svg class="a" style="left:725px;top:224px" width="9" height="9" viewBox="0 0 9 9"><path d="M1 4 L3.5 7 L8 1" fill="none" stroke="#000" stroke-width="2"/></svg>
<div class="a" style="left:739px;top:210px;width:19px;height:2px;background:#ff0000;"></div>
<div class="a" style="left:739px;top:227px;width:19px;height:2px;background:#6666b0;"></div>
<div class="t" style="left:764px;top:205.5px;font-size:11px;color:#f00010;">mag_e_phi</div>
<div class="t" style="left:764px;top:222.5px;font-size:11px;color:#00008c;">mag_e_theta</div>

<!-- cursor table -->
<div class="a" style="left:37px;top:766px;width:830px;height:1px;background:#b0b0b0;"></div><div class="a" style="left:37px;top:767px;width:830px;height:1px;background:#8e8e8e;"></div>
<div class="a" style="left:38px;top:769px;width:828px;height:13px;background:#efebea;"></div>
<div class="a" style="left:37px;top:783px;width:830px;height:1px;background:#a0a0a0;"></div>
<div class="a" style="left:38px;top:785px;width:828px;height:16px;background:#efebea;"></div>
<div class="hd" style="left:37px">X-Cursor</div>
<div class="hd" style="left:155px">Y-Cursor</div>
<div class="hd" style="left:273px">V-Caliper</div>
<div class="hd" style="left:391px">H-Cal (dX)</div>
<div class="hd" style="left:509px">H-Cal (1/dX)</div>
<div class="hd" style="left:627px">Horz-D</div>
<div class="hd" style="left:745px">Vert-D</div>
<div class="sep" style="left:154px"></div>
<div class="sep" style="left:272px"></div>
<div class="sep" style="left:390px"></div>
<div class="sep" style="left:508px"></div>
<div class="sep" style="left:626px"></div>
<div class="sep" style="left:744px"></div>
<div class="sep" style="left:862px"></div>

<!-- status bar -->
<div class="a" style="left:8px;top:810px;width:866px;height:22px;background:#f0eeed;border:1px solid #fff;border-right:none;"></div>
<svg class="a" style="left:862px;top:820px" width="12" height="11" viewBox="0 0 12 11"><g fill="#b8b8b8"><rect x="9" y="1" width="2" height="2"/><rect x="6" y="4" width="2" height="2"/><rect x="9" y="4" width="2" height="2"/><rect x="3" y="7" width="2" height="2"/><rect x="6" y="7" width="2" height="2"/><rect x="9" y="7" width="2" height="2"/></g></svg>
</body></html>
